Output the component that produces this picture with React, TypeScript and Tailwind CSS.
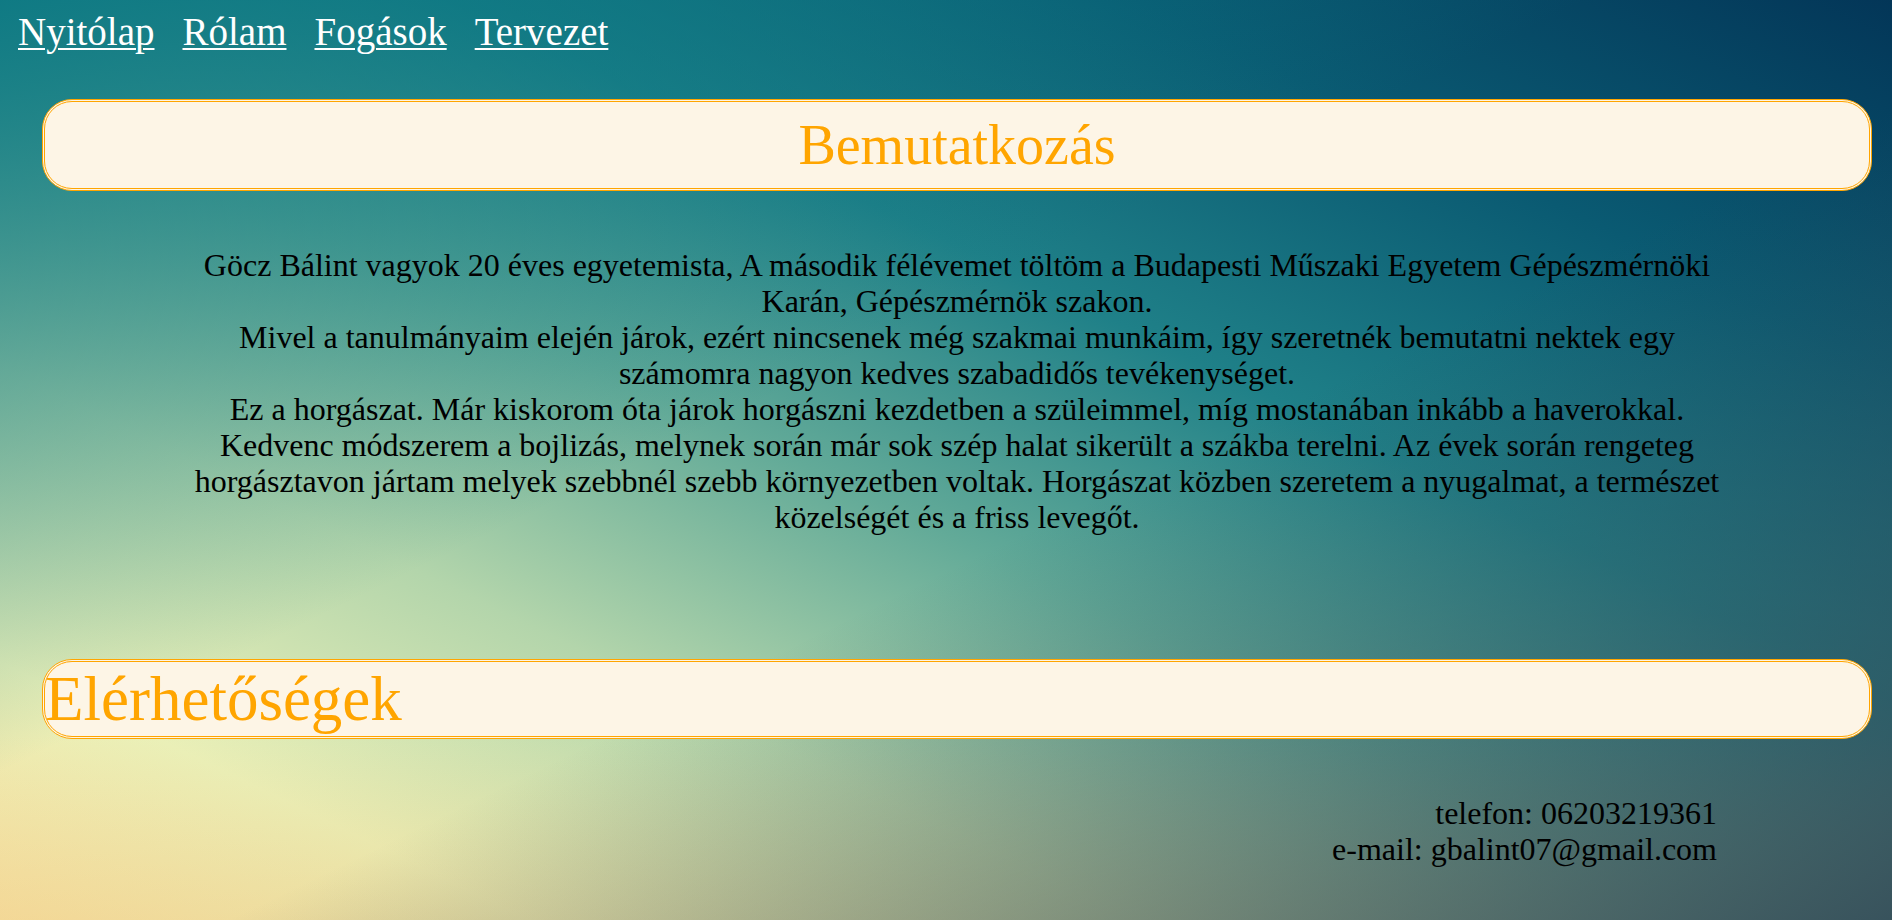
const links = ["Nyitólap", "Rólam", "Fogások", "Tervezet"];

export default function App() {
  return (
    <div className="min-h-screen w-full overflow-hidden font-['Liberation_Serif','Times_New_Roman',serif] bg-[linear-gradient(to_bottom_right,rgba(8,118,130,0.9)_0%,rgba(8,118,130,0)_42%),linear-gradient(to_top_left,rgba(52,78,90,0.95)_0%,rgba(52,78,90,0)_44%),linear-gradient(to_top,rgba(235,190,120,0.3)_0%,rgba(235,190,120,0)_20%),linear-gradient(to_top_right,#f7e3a4_0%,#eaf0b8_14%,#b3d5ab_30%,#62aa98_46%,#1f8088_62%,#0a5a72_80%,#033658_100%)]">
      <nav className="flex gap-[28px] pl-[18px] pt-[9px] text-[39px] leading-[46px] text-white">
        {links.map((l) => (
          <a key={l} href="#" className="underline decoration-[2px] underline-offset-[3px]">
            {l}
          </a>
        ))}
      </nav>

      <main className="ml-[42px] mr-[20px]">
        <section className="mt-[44px] rounded-[30px] border-[3px] border-double border-[#ffa500] bg-[#fdf5e6] py-[11px] text-center">
          <h1 className="text-[56px] leading-[64px] text-[#ffa500]">Bemutatkozás</h1>
        </section>

        <p className="mt-[56px] text-center text-[32px] leading-[36px] text-black">
          Göcz Bálint vagyok 20 éves egyetemista, A második félévemet töltöm a Budapesti Műszaki Egyetem Gépészmérnöki
          <br />
          Karán, Gépészmérnök szakon.
          <br />
          Mivel a tanulmányaim elején járok, ezért nincsenek még szakmai munkáim, így szeretnék bemutatni nektek egy
          <br />
          számomra nagyon kedves szabadidős tevékenységet.
          <br />
          Ez a horgászat. Már kiskorom óta járok horgászni kezdetben a szüleimmel, míg mostanában inkább a haverokkal.
          <br />
          Kedvenc módszerem a bojlizás, melynek során már sok szép halat sikerült a szákba terelni. Az évek során rengeteg
          <br />
          horgásztavon jártam melyek szebbnél szebb környezetben voltak. Horgászat közben szeretem a nyugalmat, a természet
          <br />
          közelségét és a friss levegőt.
        </p>

        <section className="mt-[124px] rounded-[30px] border-[3px] border-double border-[#ffa500] bg-[#fdf5e6]">
          <h2 className="text-[63px] leading-[74px] text-[#ffa500]">Elérhetőségek</h2>
        </section>

        <div className="mt-[56px] pr-[155px] text-right text-[32px] leading-[36px] text-black">
          <p>telefon: 06203219361</p>
          <p>e-mail: gbalint07@gmail.com</p>
        </div>
      </main>
    </div>
  );
}
